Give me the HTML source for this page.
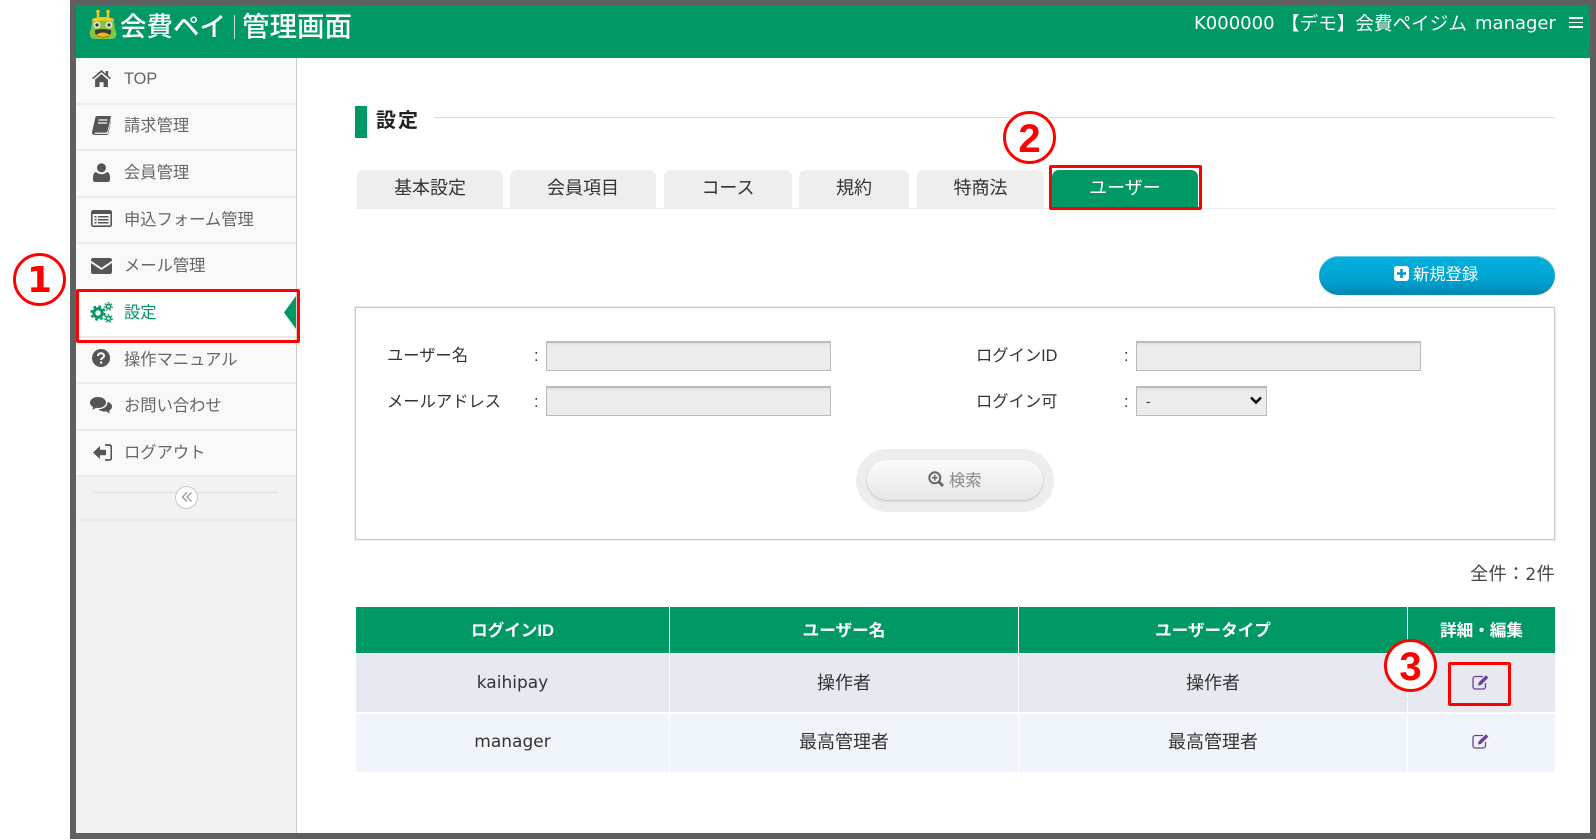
<!DOCTYPE html>
<html lang="ja"><head><meta charset="utf-8"><title>設定</title>
<style>
html,body{margin:0;padding:0;background:#fff;width:1596px;height:840px;overflow:hidden}
body{position:relative;font-family:"Liberation Sans","Noto Sans CJK JP",sans-serif;color:#333}
.a,.t,svg.i{position:absolute}
.t{white-space:nowrap;line-height:24px;height:24px}
.m{left:124px;font-size:16.3px;color:#666}
.hr{position:absolute;left:76px;width:220px;height:2px;background:#ebebeb}
.tab{position:absolute;top:170px;height:38px;background:#eee;border-radius:7px 7px 0 0;text-align:center;font-size:18px;line-height:36px;color:#333}
.lb{font-size:16.3px;color:#333}
.in{position:absolute;height:27px;background:#ececec;border:1px solid #bbb;border-top:2px solid #bbb;box-shadow:inset 0 3px 3px -2px #ddd}
.red{position:absolute;border:3.5px solid #f00;border-radius:2px;box-sizing:border-box}
.circ{position:absolute;width:53px;height:53px;box-sizing:border-box;border:3.5px solid #f00;border-radius:50%;background:#fff;color:#f00;font-weight:bold;font-size:40px;line-height:50px;text-align:center}
.th{color:#fff;font-weight:bold;font-size:16.6px;text-align:center}
.td{font-size:18px;color:#333;text-align:center}
.dj{font-family:"DejaVu Sans","Noto Sans CJK JP",sans-serif}
</style></head><body>

<!-- frame -->
<div class="a" style="left:70px;top:0;width:1526px;height:839px;background:#5f5f5f"></div>
<div class="a" style="left:76px;top:5px;width:1514px;height:828px;background:#fff"></div>

<!-- header -->
<div class="a" style="left:76px;top:5px;width:1514px;height:53px;background:#009966"></div>
<svg class="i" style="left:89px;top:9px" width="29" height="31" viewBox="0 0 29 31">
<path d="M9 2v7M19 2v7" stroke="#f4c81e" stroke-width="2.4" fill="none"/>
<circle cx="9" cy="2.5" r="1.8" fill="#f4c81e"/><circle cx="19" cy="2.5" r="1.8" fill="#f4c81e"/>
<path d="M3 10Q14 6 25 10L24 14H4Z" fill="#f4c81e"/>
<path d="M3 13Q14 10 25 13L26 20Q28 23 27 27Q26 30 22 30H6Q2 30 1 27Q0 23 2 20Z" fill="#82c646"/>
<circle cx="8" cy="16" r="3.4" fill="#dfe8d8"/><circle cx="20" cy="16" r="3.4" fill="#dfe8d8"/>
<circle cx="8" cy="16" r="1.6" fill="#333"/><circle cx="20" cy="16" r="1.6" fill="#333"/>
<path d="M6 21Q14 19 22 21Q23 28 14 28.500Q5 28 6 21Z" fill="#3a3a30"/>
<path d="M7 26Q14 21 21 26Q14 30 7 26Z" fill="#f4b414"/>
</svg>
<div class="t" style="left:120px;top:14px;font-size:26.5px;color:#fff;font-weight:500;height:26px;line-height:26px">会費ペイ</div>
<div class="a" style="left:234px;top:15px;width:1px;height:24px;background:#bfe3d5"></div>
<div class="t" style="left:242px;top:14px;font-size:27.5px;color:#fff;font-weight:500;height:26px;line-height:26px">管理画面</div>
<div class="t dj" style="left:1194px;top:12px;font-size:18px;color:#fff">K000000</div>
<div class="t" style="left:1281px;top:12px;font-size:18.6px;color:#fff">【デモ】会費ペイジム</div>
<div class="t dj" style="left:1475px;top:12px;font-size:18px;color:#fff">manager</div>
<div class="a" style="left:1569px;top:17px;width:14px;height:1.6px;background:#fff"></div>
<div class="a" style="left:1569px;top:21.500px;width:14px;height:1.6px;background:#fff"></div>
<div class="a" style="left:1569px;top:26px;width:14px;height:1.6px;background:#fff"></div>

<!-- sidebar -->
<div class="a" style="left:76px;top:58px;width:220px;height:775px;background:#f2f2f2;border-right:1px solid #ccc"></div>
<div class="a" style="left:76px;top:58px;width:220px;height:418px;background:#f9f9f9"></div>
<div class="hr" style="top:103px"></div><div class="hr" style="top:149px"></div><div class="hr" style="top:196px"></div><div class="hr" style="top:242px"></div>
<div class="hr" style="top:336px"></div><div class="hr" style="top:382px"></div><div class="hr" style="top:429px"></div><div class="hr" style="top:475px"></div><div class="hr" style="top:519px"></div>
<div class="a" style="left:76px;top:289px;width:220px;height:47px;background:#fff"></div>

<div class="t m" style="top:67px">TOP</div>
<div class="t m" style="top:114px">請求管理</div>
<div class="t m" style="top:161px">会員管理</div>
<div class="t m" style="top:207.500px">申込フォーム管理</div>
<div class="t m" style="top:254px">メール管理</div>
<div class="t m" style="top:301px;color:#009966">設定</div>
<div class="t m" style="top:347.500px">操作マニュアル</div>
<div class="t m" style="top:394px">お問い合わせ</div>
<div class="t m" style="top:440.500px">ログアウト</div>

<!-- home -->
<svg class="i" style="left:92px;top:70px" width="19" height="17" viewBox="0 0 20 18" fill="#555"><path d="M10 0L0 8.600l1 1.200L10 2.400l9 7.400 1-1.200-3-2.600V1h-2.600v3L10 0zM3.200 10.200V18h4.600v-5h4.400v5h4.600v-7.800L10 4.400z"/></svg>
<!-- book -->
<svg class="i" style="left:92px;top:116px" width="19" height="19" viewBox="0 0 19 19" fill="#555"><path d="M5 0h13c.8 0 1 .6.8 1.300L15.600 15c-.3 1-1 1.600-2 1.600H3.400c-.7 0-.9.3-.9.6 0 .4.3.7 1 .7h11.200c.6 0 1-.3 1.200-.8L19 3.400V5l-2.500 12.200c-.2 1-1 1.800-2.200 1.800H2.600C1 19 0 17.800 0 16.500c0-.4 0-.8.2-1.200L3.400 1.300C3.600.5 4.200 0 5 0z"/><path d="M6.500 4h9M6 7h9" stroke="#f9f9f9" stroke-width="1.200"/></svg>
<!-- user -->
<svg class="i" style="left:93px;top:163px" width="17" height="19" viewBox="0 0 17 19" fill="#555"><circle cx="8.500" cy="4.800" r="4.500"/><path d="M3 9c1.500 1.500 3.500 2.200 5.500 2.200S12.500 10.500 14 9c2 .4 3 2.500 3 6v1.500c0 1.500-1 2.500-2.500 2.500h-12C1 19 0 18 0 16.500V15c0-3.500 1-5.600 3-6z"/></svg>
<!-- list-alt -->
<svg class="i" style="left:91px;top:210px" width="21" height="17" viewBox="0 0 21 17"><rect x=".8" y=".8" width="19.400" height="15.400" rx="1.500" fill="none" stroke="#555" stroke-width="1.600"/><rect x="1" y="1" width="19" height="3" fill="#555"/><path d="M3.500 6.800h2M7 6.800h10.500M3.500 9.800h2M7 9.800h10.500M3.500 12.800h2M7 12.800h10.500" stroke="#555" stroke-width="1.500"/></svg>
<!-- envelope -->
<svg class="i" style="left:91px;top:258px" width="21" height="16" viewBox="0 0 21 16" fill="#555"><path d="M2 0h17c1.100 0 2 .9 2 2v.800L10.500 9.800 0 2.800V2c0-1.100.9-2 2-2z"/><path d="M0 5l10.500 7L21 5v9c0 1.100-.9 2-2 2H2c-1.100 0-2-.9-2-2z"/></svg>
<!-- cogs -->
<svg class="i" style="left:90px;top:302px" width="23" height="21" viewBox="0 0 23 21" fill="none" stroke="#009966">
<circle cx="8" cy="11" r="4.200" stroke-width="3"/><circle cx="8" cy="11" r="6.700" stroke-width="2" stroke-dasharray="2.800 2.500"/>
<circle cx="18.500" cy="4.500" r="2.100" stroke-width="1.600"/><circle cx="18.500" cy="4.500" r="3.700" stroke-width="1.300" stroke-dasharray="1.700 1.600"/>
<circle cx="18.500" cy="16.500" r="2.100" stroke-width="1.600"/><circle cx="18.500" cy="16.500" r="3.700" stroke-width="1.300" stroke-dasharray="1.700 1.600"/>
</svg>
<!-- question -->
<svg class="i" style="left:92px;top:349px" width="18" height="18" viewBox="0 0 18 18"><circle cx="9" cy="9" r="9" fill="#555"/><path d="M6 7c0-1.800 1.300-2.800 3-2.800s3 1 3 2.500c0 2.300-3 2.300-3 4.300" fill="none" stroke="#f9f9f9" stroke-width="2"/><rect x="8" y="12.500" width="2.200" height="2.200" fill="#f9f9f9"/></svg>
<!-- comments -->
<svg class="i" style="left:90px;top:397px" width="22" height="18" viewBox="0 0 22 18" fill="#555"><path d="M8 0c4.400 0 8 2.400 8 5.500S12.400 11 8 11c-.7 0-1.400 0-2-.2C4.800 11.800 3.400 12.400 2 12.600c.6-.8 1-1.600 1.200-2.600C1.200 9 0 7.400 0 5.500 0 2.400 3.600 0 8 0z"/><path d="M17.500 5c2.700.6 4.500 2.400 4.500 4.500 0 1.800-1.200 3.300-3 4.200.2.900.6 1.700 1.200 2.500-1.400-.2-2.800-.8-3.900-1.800-.6.1-1.200.2-1.800.2-2.500 0-4.700-.9-5.900-2.300 4.800-.1 8.900-2.900 8.900-6.800z"/></svg>
<!-- sign-out -->
<svg class="i" style="left:93px;top:444px" width="19" height="17" viewBox="0 0 19 17" fill="#555"><path d="M0 8.500L7 2v3.800h6v5.400H7V15z"/><path d="M12 1h4c1.400 0 2.300.9 2.300 2.300v10.400c0 1.400-.9 2.300-2.300 2.300h-4" fill="none" stroke="#555" stroke-width="1.700"/></svg>

<!-- collapse -->
<div class="a" style="left:93px;top:492px;width:185px;height:1px;background:#ddd"></div>
<div class="a" style="left:175px;top:486px;width:21px;height:21px;border:1px solid #c8c8c8;border-radius:50%;background:#fff"></div>
<svg class="i" style="left:181px;top:491px" width="12" height="12" viewBox="0 0 12 12" fill="none" stroke="#999" stroke-width="1.300"><path d="M6 1.500L1.500 6 6 10.500M10.500 1.500L6 6l4.500 4.500"/></svg>
<!-- active arrow -->
<svg class="i" style="left:284px;top:296px" width="12" height="33" viewBox="0 0 12 33"><path d="M12 0L0 16.500 12 33z" fill="#009966"/></svg>

<!-- title -->
<div class="a" style="left:355px;top:106px;width:12px;height:32px;background:#009966"></div>
<div class="t" style="left:376px;top:109px;font-size:20px;font-weight:bold;letter-spacing:2px;color:#222">設定</div>
<div class="a" style="left:434px;top:117px;width:1121px;height:1px;background:#ddd"></div>

<!-- tabs -->
<div class="a" style="left:355px;top:208px;width:1200px;height:1px;background:#eee"></div>
<div class="tab" style="left:357px;width:146px">基本設定</div>
<div class="tab" style="left:510px;width:146px">会員項目</div>
<div class="tab" style="left:664px;width:128px">コース</div>
<div class="tab" style="left:799px;width:110px">規約</div>
<div class="tab" style="left:917px;width:127px">特商法</div>
<div class="tab" style="left:1052px;width:146px;background:#009966;color:#fff;height:38px">ユーザー</div>
<div class="red" style="left:1049px;top:165px;width:153px;height:45px"></div>

<!-- new button -->
<div class="a" style="left:1319px;top:256px;width:236px;height:39px;border-radius:20px;background:linear-gradient(#00b0de,#00a4d2 60%,#0087b2);box-shadow:inset 0 1px 0 #6cc9e4"></div>
<svg class="i" style="left:1394px;top:266px" width="15" height="15" viewBox="0 0 15 15"><rect width="15" height="15" rx="3" fill="#fff"/><path d="M7.500 3v9M3 7.500h9" stroke="#0098c6" stroke-width="2.600"/></svg>
<div class="t" style="left:1413px;top:262.500px;font-size:16.300px;color:#fff">新規登録</div>

<!-- search box -->
<div class="a" style="left:355px;top:307px;width:1198px;height:231px;border:1px solid #ccc;box-shadow:0 0 0 .5px #ddd"></div>
<div class="t lb" style="left:387px;top:344px">ユーザー名</div>
<div class="t lb" style="left:534px;top:344px">:</div>
<div class="in" style="left:546px;top:341px;width:283px"></div>
<div class="t lb" style="left:387px;top:390px">メールアドレス</div>
<div class="t lb" style="left:534px;top:390px">:</div>
<div class="in" style="left:546px;top:386px;width:283px"></div>
<div class="t lb" style="left:976px;top:344px">ログインID</div>
<div class="t lb" style="left:1124px;top:344px">:</div>
<div class="in" style="left:1136px;top:341px;width:283px"></div>
<div class="t lb" style="left:976px;top:390px">ログイン可</div>
<div class="t lb" style="left:1124px;top:390px">:</div>
<div class="in" style="left:1136px;top:386px;width:129px"></div>
<div class="t" style="left:1146px;top:389px;font-size:14px;color:#333">-</div>
<svg class="i" style="left:1250px;top:396px" width="12" height="9" viewBox="0 0 12 9" fill="none" stroke="#111" stroke-width="2.600"><path d="M1 1.500l5 5 5-5"/></svg>

<div class="a" style="left:856px;top:449px;width:198px;height:63px;border-radius:32px;background:#ededed"></div>
<div class="a" style="left:867px;top:460px;width:176px;height:40px;border-radius:20px;background:linear-gradient(#fbfbfb,#e6e6e6);box-shadow:0 1px 2px #bbb"></div>
<svg class="i" style="left:928px;top:471px" width="16" height="16" viewBox="0 0 16 16" fill="none" stroke="#666"><circle cx="6.800" cy="6.800" r="5.500" stroke-width="2"/><path d="M11 11l4 4" stroke-width="2.800"/><path d="M6.800 4v5.600M4 6.800h5.600" stroke-width="1.500"/></svg>
<div class="t" style="left:949px;top:469px;font-size:16.300px;color:#888">検索</div>

<!-- count -->
<div class="t" style="right:41px;top:561.500px;font-size:18px;letter-spacing:.4px;color:#444">全件：<span class="dj" style="font-size:17px">2</span>件</div>

<!-- table -->
<div class="a" style="left:356px;top:607px;width:1199px;height:46px;background:#009966"></div>
<div class="a" style="left:356px;top:654px;width:1199px;height:58px;background:#e6e9f0"></div>
<div class="a" style="left:356px;top:714px;width:1199px;height:58px;background:#f0f4fb"></div>
<div class="a" style="left:669px;top:607px;width:1px;height:165px;background:#fff"></div>
<div class="a" style="left:1018px;top:607px;width:1px;height:165px;background:#fff"></div>
<div class="a" style="left:1407px;top:607px;width:1px;height:165px;background:#fff"></div>

<div class="t th" style="left:356px;width:313px;top:619px">ログインID</div>
<div class="t th" style="left:670px;width:348px;top:619px">ユーザー名</div>
<div class="t th" style="left:1019px;width:388px;top:619px">ユーザータイプ</div>
<div class="t th" style="left:1408px;width:147px;top:619px">詳細・編集</div>

<div class="t td dj" style="left:356px;width:313px;top:671px;font-size:17px">kaihipay</div>
<div class="t td" style="left:670px;width:348px;top:671px">操作者</div>
<div class="t td" style="left:1019px;width:388px;top:671px">操作者</div>
<div class="t td dj" style="left:356px;width:313px;top:730px;font-size:17px">manager</div>
<div class="t td" style="left:670px;width:348px;top:730px">最高管理者</div>
<div class="t td" style="left:1019px;width:388px;top:730px">最高管理者</div>

<svg class="i" style="left:1472px;top:674px" width="18" height="16" viewBox="0 0 18 16" fill="none" stroke="#6b3fa0"><path d="M11 2.500H3.200C2 2.500 1 3.500 1 4.700v8.100C1 14 2 15 3.200 15h8.100c1.200 0 2.200-1 2.200-2.200V9" stroke-width="1.300"/><path d="M6 11.500l.6-3L14 1.200l2.400 2.400L9 11z" fill="#6b3fa0" stroke="none"/></svg>
<svg class="i" style="left:1472px;top:733px" width="18" height="16" viewBox="0 0 18 16" fill="none" stroke="#6b3fa0"><path d="M11 2.500H3.200C2 2.500 1 3.500 1 4.700v8.100C1 14 2 15 3.200 15h8.100c1.200 0 2.200-1 2.200-2.200V9" stroke-width="1.300"/><path d="M6 11.500l.6-3L14 1.200l2.400 2.400L9 11z" fill="#6b3fa0" stroke="none"/></svg>

<!-- annotations -->
<div class="red" style="left:76px;top:289px;width:224px;height:54px"></div>
<div class="red" style="left:1448px;top:662px;width:63px;height:44px"></div>
<div class="circ dj" style="left:13px;top:253px;font-size:36px">1</div>
<div class="circ" style="left:1003px;top:111px">2</div>
<div class="circ" style="left:1384px;top:639px">3</div>
</body></html>
